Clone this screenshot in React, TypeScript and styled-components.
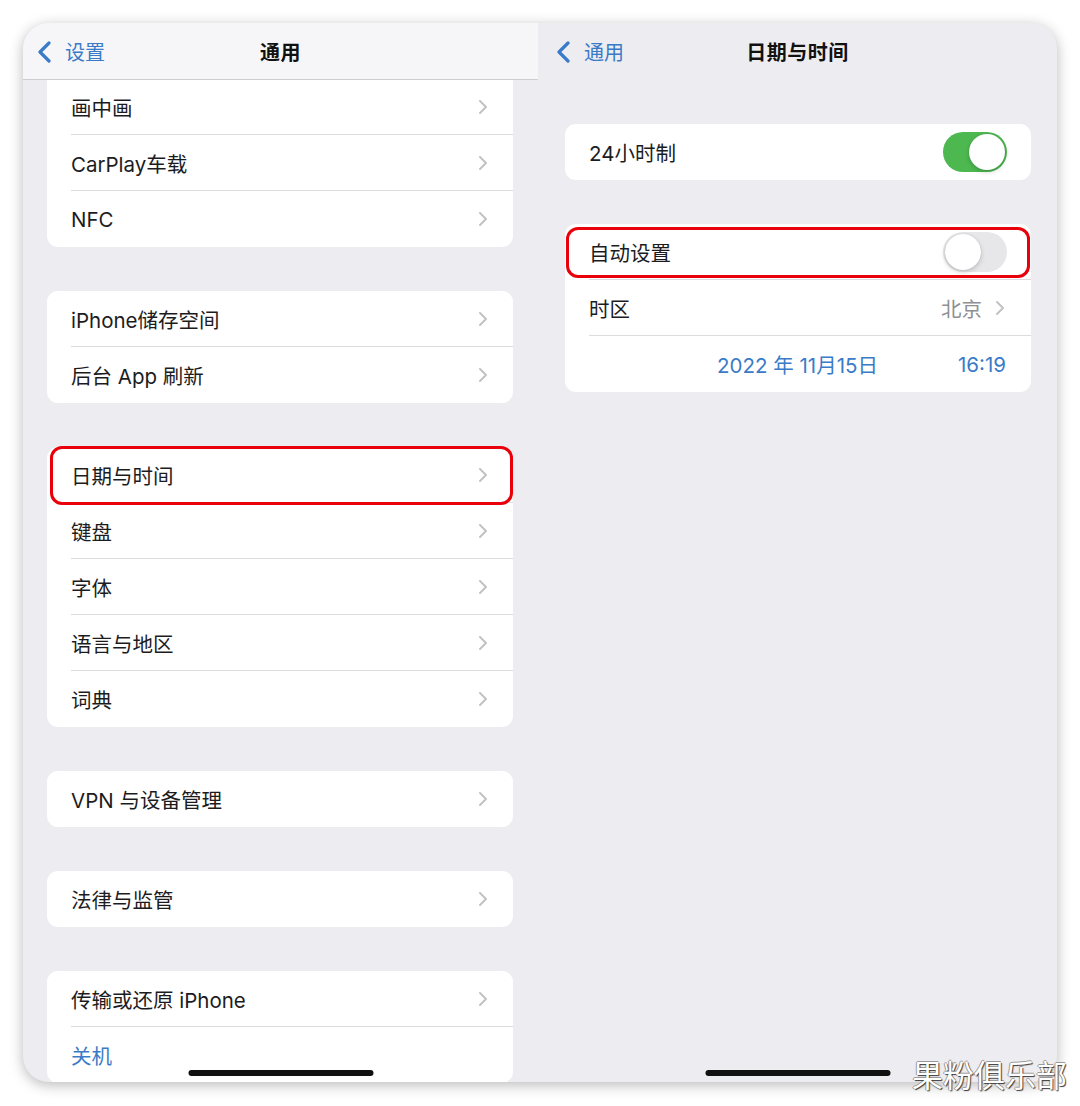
import styled, { createGlobalStyle } from "styled-components";

const GlobalStyle = createGlobalStyle`
	html, body {
		margin: 0;
		padding: 0;
		background: #ffffff;
	}
	body {
		font-family: "Inter", "Noto Sans CJK SC", sans-serif;
		color: #1c1c1e;
	}
`;

const Page = styled.div`
	position: relative;
	width: 1080px;
	height: 1106px;
	box-sizing: border-box;
	padding: 23px 0 0 23px;
	overflow: hidden;
	background: #ffffff;
`;

const Frame = styled.div`
	width: 1034px;
	height: 1059px;
	display: flex;
	border-radius: 26px;
	overflow: hidden;
	background: #ededf1;
	box-shadow: 0 3px 14px rgba(0, 0, 0, 0.28);
`;

const Pane = styled.div<{ $width?: number }>`
	position: relative;
	display: flex;
	flex-direction: column;
	overflow: hidden;
	${(p) => (p.$width ? `width: ${p.$width}px;` : "flex: 1;")}
`;

const NavBar = styled.div<{ $solid?: boolean }>`
	position: relative;
	z-index: 1;
	height: 57px;
	flex-shrink: 0;
	box-sizing: border-box;
	display: grid;
	grid-template-columns: 1fr auto 1fr;
	align-items: center;
	background: ${(p) => (p.$solid ? "#f6f6f8" : "transparent")};
	border-bottom: 1px solid ${(p) => (p.$solid ? "#cdcdd2" : "transparent")};
`;

const Back = styled.div<{ $indent: number }>`
	display: flex;
	align-items: center;
	gap: 13px;
	padding-left: ${(p) => p.$indent}px;
	color: #3a7bc8;
	font-size: 20px;
	padding-top: 1px;
`;

const Title = styled.div`
	font-size: 20px;
	font-weight: 600;
	color: #111111;
	letter-spacing: 0.5px;
`;

const List = styled.div<{ $pad: string }>`
	display: flex;
	flex-direction: column;
	gap: 44px;
	padding: ${(p) => p.$pad};
`;

const Card = styled.div<{ $flatTop?: boolean }>`
	background: #ffffff;
	border-radius: ${(p) => (p.$flatTop ? "0 0 11px 11px" : "11px")};
	flex-shrink: 0;
	${(p) => (p.$flatTop ? "margin-top: -1px;" : "")}
`;

const RowInner = styled.div<{ $center?: boolean }>`
	height: 56px;
	box-sizing: border-box;
	padding-right: 25px;
	border-bottom: 1px solid #dcdce0;
	font-size: 20.5px;
	${(p) =>
		p.$center
			? `display: grid; grid-template-columns: 1fr auto 1fr; align-items: center;`
			: `display: flex; align-items: center; justify-content: space-between;`}
`;

const Row = styled.div<{ $mark?: string }>`
	position: relative;
	padding-left: 24px;
	&:last-child ${RowInner} {
		border-bottom: none;
	}
	${(p) =>
		p.$mark
			? `&::after {
		content: "";
		position: absolute;
		inset: ${p.$mark};
		border: 3px solid #e8000b;
		border-radius: 12px;
		pointer-events: none;
	}`
			: ""}
`;

const Label = styled.span<{ $blue?: boolean }>`
	color: ${(p) => (p.$blue ? "#3a7bc8" : "#1c1c1e")};
`;

const Trail = styled.div`
	display: flex;
	align-items: center;
	gap: 13px;
	color: #8e8e93;
	padding-right: 1px;
`;

const DateText = styled.span`
	grid-column: 2;
	color: #3a7bc8;
`;

const TimeText = styled.span`
	grid-column: 3;
	justify-self: end;
	color: #3a7bc8;
`;

const Toggle = styled.div<{ $on?: boolean }>`
	position: relative;
	width: 64px;
	height: 40px;
	border-radius: 20px;
	background: ${(p) => (p.$on ? "#4cb84f" : "#e7e7ea")};
	margin-right: -1px;
	&::after {
		content: "";
		position: absolute;
		top: 2px;
		left: ${(p) => (p.$on ? "26px" : "2px")};
		width: 36px;
		height: 36px;
		border-radius: 50%;
		background: #ffffff;
		box-shadow: 0 2px 5px rgba(0, 0, 0, 0.18), 0 0 1px rgba(0, 0, 0, 0.2);
	}
`;

const HomeBar = styled.div`
	position: absolute;
	left: 50%;
	bottom: 6px;
	width: 185px;
	height: 6px;
	border-radius: 3px;
	background: #111111;
	transform: translateX(-50%);
`;

const Watermark = styled.div`
	position: absolute;
	right: 13px;
	bottom: 17px;
	font-family: "Noto Sans CJK SC", sans-serif;
	font-size: 31px;
	line-height: 1;
	color: #ffffff;
	text-shadow: 1px 1px 1px #3a3a3a, -1px 0 0 #9a9a9a, 0 -1px 0 #9a9a9a;
`;

const BackChevron = () => (
	<svg width="15" height="22" viewBox="0 0 15 22">
		<path
			d="M12 2 L3 11 L12 20"
			fill="none"
			stroke="#3a7bc8"
			strokeWidth="3.2"
			strokeLinecap="round"
			strokeLinejoin="round"
		/>
	</svg>
);

const Chevron = () => (
	<svg width="10" height="16" viewBox="0 0 10 16">
		<path
			d="M2 2 L8 8 L2 14"
			fill="none"
			stroke="#c2c2c6"
			strokeWidth="2"
			strokeLinecap="round"
			strokeLinejoin="round"
		/>
	</svg>
);

type Item = { label: string; mark?: string; blue?: boolean; plain?: boolean };

const groups: Item[][] = [
	[{ label: "画中画" }, { label: "CarPlay车载" }, { label: "NFC" }],
	[{ label: "iPhone储存空间" }, { label: "后台 App 刷新" }],
	[
		{ label: "日期与时间", mark: "-1px 0 -2px 3px" },
		{ label: "键盘" },
		{ label: "字体" },
		{ label: "语言与地区" },
		{ label: "词典" },
	],
	[{ label: "VPN 与设备管理" }],
	[{ label: "法律与监管" }],
	[{ label: "传输或还原 iPhone" }, { label: "关机", blue: true, plain: true }],
];

export default function App() {
	return (
		<Page>
			<GlobalStyle />
			<Frame>
				<Pane $width={515}>
					<NavBar $solid>
						<Back $indent={14}>
							<BackChevron />
							<span>设置</span>
						</Back>
						<Title>通用</Title>
					</NavBar>
					<List $pad="0 25px 0 24px">
						{groups.map((g, i) => (
							<Card key={i} $flatTop={i === 0}>
								{g.map((it) => (
									<Row key={it.label} $mark={it.mark}>
										<RowInner>
											<Label $blue={it.blue}>{it.label}</Label>
											{!it.plain && <Chevron />}
										</RowInner>
									</Row>
								))}
							</Card>
						))}
					</List>
					<HomeBar />
				</Pane>
				<Pane>
					<NavBar>
						<Back $indent={18}>
							<BackChevron />
							<span>通用</span>
						</Back>
						<Title>日期与时间</Title>
					</NavBar>
					<List $pad="44px 26px 0 27px">
						<Card>
							<Row>
								<RowInner>
									<Label>24小时制</Label>
									<Toggle $on />
								</RowInner>
							</Row>
						</Card>
						<Card>
							<Row $mark="3px 1px 2px 1px">
								<RowInner>
									<Label>自动设置</Label>
									<Toggle />
								</RowInner>
							</Row>
							<Row>
								<RowInner>
									<Label>时区</Label>
									<Trail>
										<span>北京</span>
										<Chevron />
									</Trail>
								</RowInner>
							</Row>
							<Row>
								<RowInner $center>
									<DateText>2022 年 11月15日</DateText>
									<TimeText>16:19</TimeText>
								</RowInner>
							</Row>
						</Card>
					</List>
					<HomeBar />
				</Pane>
			</Frame>
			<Watermark>果粉俱乐部</Watermark>
		</Page>
	);
}
